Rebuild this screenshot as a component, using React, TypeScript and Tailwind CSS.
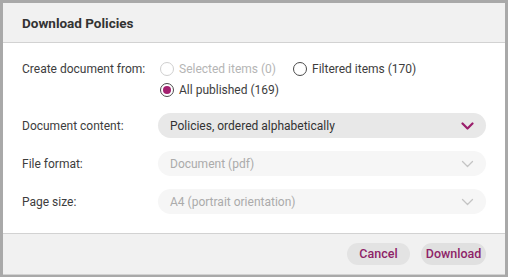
import React from 'react';

// Radio circle, drawn by hand to match the dialog's style
function Radio({ checked, disabled }: { checked?: boolean; disabled?: boolean }) {
  return (
    <span
      className={`w-[14px] h-[14px] rounded-full border flex items-center justify-center shrink-0 ${
        disabled ? 'border-[#cfcfcf]' : 'border-[#4a4a4a]'
      }`}
    >
      {checked && <span className="w-[8px] h-[8px] rounded-full bg-[#a3206f]" />}
    </span>
  );
}

function Chevron({ active }: { active?: boolean }) {
  return (
    <svg width="13" height="8" viewBox="0 0 13 8" fill="none">
      <path
        d="M1.5 1.5 L6.5 6.5 L11.5 1.5"
        stroke={active ? '#9b1f6c' : '#c4c4c4'}
        strokeWidth={active ? 2.2 : 1.3}
        strokeLinecap="round"
        strokeLinejoin="round"
      />
    </svg>
  );
}

function SelectBox({ value, active }: { value: string; active?: boolean }) {
  return (
    <div
      className={`flex-1 h-[25px] rounded-full flex items-center justify-between pl-[12px] pr-[12px] ${
        active ? 'bg-[#e8e8e8] text-[#333]' : 'bg-[#f6f6f6] text-[#ababab]'
      }`}
    >
      <span>{value}</span>
      <Chevron active={active} />
    </div>
  );
}

export default function App() {
  const font = { fontFamily: 'Roboto, "Liberation Sans", sans-serif' };

  return (
    <div className="w-[508px] h-[277px] bg-[#a9a9a9] pt-[3px] pl-[3px] pr-[3px] pb-[2px]" style={font}>
      <div className="h-full bg-white flex flex-col">
        {/* Header */}
        <div className="h-[40px] bg-[#f1f1f1] border-b border-[#d2d2d2] flex items-center pl-[19px] pt-[1px]">
          <h1 className="text-[13.5px] font-bold text-[#333]">Download Policies</h1>
        </div>

        {/* Body */}
        <div className="flex-1 pt-[16px] pl-[19px] pr-[19px] text-[12px] text-[#3d3d3d]">
          <div className="flex">
            <div className="w-[136px] h-[20px] flex items-center">Create document from:</div>
            <div className="flex flex-col gap-[1px]">
              <div className="flex items-center h-[20px]">
                <label className="flex items-center gap-[5px] text-[#b5b5b5] ml-[2px]">
                  <Radio disabled />
                  Selected items (0)
                </label>
                <label className="flex items-center gap-[5px] ml-[17px]">
                  <Radio />
                  Filtered items (170)
                </label>
              </div>
              <div className="flex items-center h-[20px]">
                <label className="flex items-center gap-[5px] ml-[2px]">
                  <Radio checked />
                  All published (169)
                </label>
              </div>
            </div>
          </div>

          <div className="flex items-center mt-[13px]">
            <div className="w-[136px]">Document content:</div>
            <SelectBox value="Policies, ordered alphabetically" active />
          </div>

          <div className="flex items-center mt-[13px]">
            <div className="w-[136px]">File format:</div>
            <SelectBox value="Document (pdf)" />
          </div>

          <div className="flex items-center mt-[13px]">
            <div className="w-[136px]">Page size:</div>
            <SelectBox value="A4 (portrait orientation)" />
          </div>
        </div>

        {/* Footer */}
        <div className="h-[42px] bg-[#f1f1f1] border-t border-b border-[#d2d2d2] flex items-center justify-end gap-[11px] pr-[19px]">
          <button className="h-[22px] w-[63px] rounded-full bg-[#e3e3e3] text-[12.5px] font-medium text-[#8e2468]">
            Cancel
          </button>
          <button className="h-[22px] w-[65px] rounded-full bg-[#e0e0e0] text-[12.5px] font-medium text-[#8e2468]">
            Download
          </button>
        </div>
      </div>
    </div>
  );
}
